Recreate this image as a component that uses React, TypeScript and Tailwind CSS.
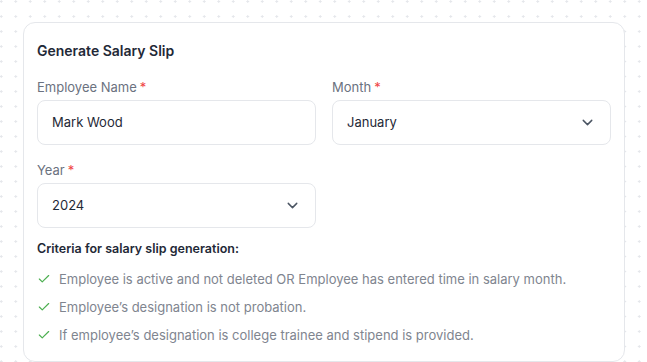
import { ChevronDown, Check } from 'lucide-react'

const criteria = [
  'Employee is active and not deleted OR Employee has entered time in salary month.',
  'Employee\u2019s designation is not probation.',
  'If employee\u2019s designation is college trainee and stipend is provided.',
]

const Label = ({ text }: { text: string }) => (
  <label className="block text-[13px] leading-[18px] text-[#6b7280] mb-[4px]">
    {text}
    <span className="text-[#ef4444] ml-[3px]">*</span>
  </label>
)

const SelectBox = ({ value }: { value: string }) => (
  <div className="flex items-center justify-between h-[45px] px-[14px] rounded-lg border border-[#e5e7eb] bg-white text-[13px] text-[#1f2937]">
    <span>{value}</span>
    <ChevronDown size={17} strokeWidth={2} className="text-[#4b5563]" />
  </div>
)

export default function App() {
  return (
    <div
      className="w-[647px] h-[362px] overflow-hidden bg-white pt-[22px] pl-[23px] pr-[22px]"
      style={{
        fontFamily: 'Inter, "Noto Sans", sans-serif',
        backgroundImage: 'radial-gradient(circle, #e5e7eb 1px, transparent 1.2px)',
        backgroundSize: '14.5px 15px',
        backgroundPosition: '-6px -6px',
      }}
    >
      <div className="bg-white border border-[#e5e7eb] rounded-xl px-[13px] pt-[18px] pb-[16px]">
        <h2 className="text-[14px] leading-5 font-semibold text-[#1f2937] mb-[17px]">Generate Salary Slip</h2>

        <div className="grid grid-cols-2 gap-x-4 gap-y-[16px]">
          <div>
            <Label text="Employee Name" />
            <div className="flex items-center h-[45px] px-[14px] rounded-lg border border-[#e5e7eb] bg-white text-[13px] text-[#1f2937]">
              Mark Wood
            </div>
          </div>
          <div>
            <Label text="Month" />
            <SelectBox value="January" />
          </div>
          <div>
            <Label text="Year" />
            <SelectBox value="2024" />
          </div>
        </div>

        <h3 className="mt-[11px] text-[12.5px] leading-5 font-semibold text-[#1f2937]">Criteria for salary slip generation:</h3>
        <ul className="mt-[10px] flex flex-col gap-[8px]">
          {criteria.map(c => (
            <li key={c} className="flex items-center gap-[8px] text-[13px] leading-5 text-[#80858f]">
              <Check size={14} strokeWidth={2} className="text-[#4caf50] shrink-0" />
              {c}
            </li>
          ))}
        </ul>
      </div>
    </div>
  )
}
